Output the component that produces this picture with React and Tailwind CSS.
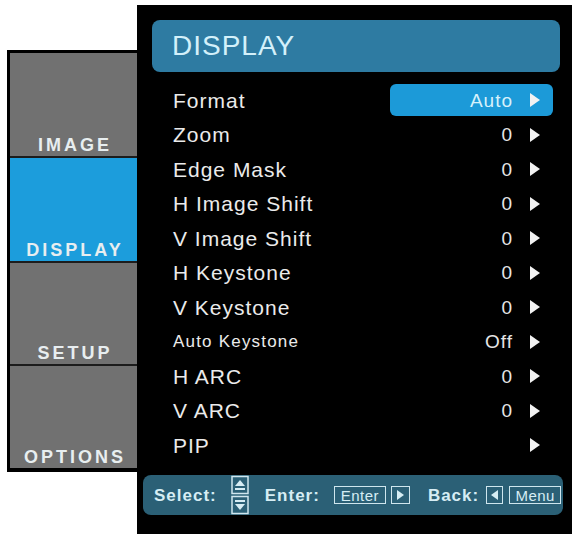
import React from "react";

const tabs = [
  { label: "IMAGE", h: "h-[103px]", active: false },
  { label: "DISPLAY", h: "h-[103px]", active: true },
  { label: "SETUP", h: "h-[101px]", active: false },
  { label: "OPTIONS", h: "h-[102px]", active: false },
];

const rows = [
  { label: "Format", value: "Auto", selected: true },
  { label: "Zoom", value: "0" },
  { label: "Edge Mask", value: "0" },
  { label: "H Image Shift", value: "0" },
  { label: "V Image Shift", value: "0" },
  { label: "H Keystone", value: "0" },
  { label: "V Keystone", value: "0" },
  { label: "Auto Keystone", value: "Off", small: true },
  { label: "H ARC", value: "0" },
  { label: "V ARC", value: "0" },
  { label: "PIP", value: "" },
];

/** Solid right-pointing arrow used on every menu row */
function RowArrow() {
  return (
    <svg width="10" height="14" viewBox="0 0 10 14" className="shrink-0">
      <polygon points="0,0 10,7 0,14" fill="#f2f2f2" />
    </svg>
  );
}

/** Left column of category tabs */
function SideTabs() {
  return (
    <div className="mt-[50px] ml-[7px] w-[130px] h-[422px] border-l-[3px] border-t-[3px] border-b-[4px] border-black flex flex-col">
      {tabs.map((t, i) => (
        <div
          key={t.label}
          className={`${t.h} ${i > 0 ? "border-t-2 border-[#1c1c1c]" : ""} ${
            t.active ? "bg-[#1c9ddc]" : "bg-[#717171]"
          } flex items-end justify-center pb-[1px] box-content`}
        >
          <span className="pl-[3px] text-[18px] leading-[20px] font-bold tracking-[3px] text-[#e8eef0]">
            {t.label}
          </span>
        </div>
      ))}
    </div>
  );
}

/** Little outlined key cap, as drawn in the hint bar */
function KeyBox({ className, children }) {
  return (
    <div
      className={`h-[18px] border-[1.5px] border-[#cfe6ee] flex items-center justify-center ${className}`}
    >
      {children}
    </div>
  );
}

function HintBar() {
  return (
    <div className="mt-[12.5px] ml-[6px] w-[420px] h-[40px] rounded-[8px] bg-[#2b6076] flex items-center pl-[11px] text-[#d6edf4]">
      <span className="text-[17px] font-bold tracking-[1px] leading-none">Select:</span>
      {/* up / down keys */}
      <svg width="18" height="40" viewBox="0 0 18 40" className="ml-[14px]">
        <rect x="1" y="1.5" width="16" height="17" fill="none" stroke="#cfe6ee" strokeWidth="1.5" />
        <polygon points="4,11 9,5 14,11" fill="#d6edf4" />
        <rect x="4" y="13" width="10" height="2" fill="#d6edf4" />
        <rect x="1" y="21.5" width="16" height="17" fill="none" stroke="#cfe6ee" strokeWidth="1.5" />
        <rect x="4" y="25" width="10" height="2" fill="#d6edf4" />
        <polygon points="4,29 9,35 14,29" fill="#d6edf4" />
      </svg>
      <span className="ml-[16px] text-[17px] font-bold tracking-[1px] leading-none">Enter:</span>
      <KeyBox className="ml-[14px] w-[52px]">
        <span className="text-[15px] leading-none tracking-[0.5px]">Enter</span>
      </KeyBox>
      <KeyBox className="ml-[5px] w-[19px]">
        <svg width="7" height="10" viewBox="0 0 7 10">
          <polygon points="0,0 7,5 0,10" fill="#d6edf4" />
        </svg>
      </KeyBox>
      <span className="ml-[18px] text-[17px] font-bold tracking-[1px] leading-none">Back:</span>
      <KeyBox className="ml-[7px] w-[17px]">
        <svg width="7" height="10" viewBox="0 0 7 10">
          <polygon points="7,0 0,5 7,10" fill="#d6edf4" />
        </svg>
      </KeyBox>
      <KeyBox className="ml-[6px] w-[52px]">
        <span className="text-[15px] leading-none tracking-[0.5px]">Menu</span>
      </KeyBox>
    </div>
  );
}

export default function App() {
  return (
    <div className="w-[576px] h-[534px] bg-white flex overflow-hidden font-['Liberation_Sans',Arial,sans-serif]">
      <SideTabs />
      {/* main menu panel */}
      <div className="mt-[5px] w-[435px] h-[529px] bg-black pt-[15px]">
        <div className="ml-[15px] w-[408px] h-[52px] rounded-[8px] bg-[#2e7ba2] flex items-center pl-[20px]">
          <span className="text-[28px] leading-none tracking-[1px] text-[#d3f0fa]">DISPLAY</span>
        </div>

        <div className="mt-[11px]">
          {rows.map((r) => (
            <div key={r.label} className="h-[34.5px] flex items-center pl-[36px]">
              <span
                className={`flex-1 text-[#ebebeb] leading-none ${
                  r.small ? "text-[17px] tracking-[1.2px]" : "text-[21px] tracking-[1px]"
                }`}
              >
                {r.label}
              </span>
              <div
                className={`mr-[19px] w-[163px] h-[32px] rounded-[6px] flex items-center justify-end pr-[13px] ${
                  r.selected ? "bg-[#1c9ad8]" : ""
                }`}
              >
                <span
                  className={`leading-none tracking-[1px] ${
                    r.selected ? "text-[19px] text-[#d6f1fb]" : "text-[19px] text-[#e6e6e6]"
                  }`}
                >
                  {r.value}
                </span>
                <div className="ml-[17px]">
                  <RowArrow />
                </div>
              </div>
            </div>
          ))}
        </div>

        <HintBar />
      </div>
    </div>
  );
}
